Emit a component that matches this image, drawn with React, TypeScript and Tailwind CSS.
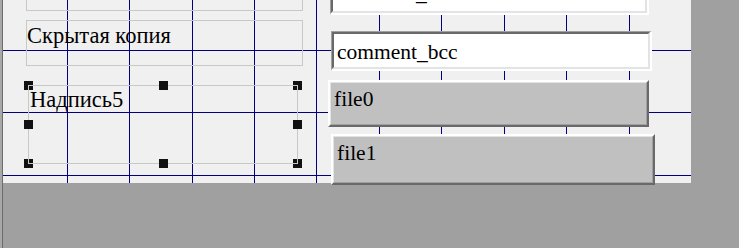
import React from "react";

const VX = [64, 126, 189, 251, 313, 376, 438, 501, 563, 626];
const HY = [50, 112, 175];

function Grid() {
  return (
    <svg className="absolute left-0 top-0" width="688" height="183" shapeRendering="crispEdges">
      {VX.map((x) => (
        <line key={`v${x}`} x1={x + 0.5} y1={0} x2={x + 0.5} y2={183} stroke="#000080" strokeWidth={1} />
      ))}
      {HY.map((y) => (
        <line key={`h${y}`} x1={0} y1={y + 0.5} x2={688} y2={y + 0.5} stroke="#000080" strokeWidth={1} />
      ))}
    </svg>
  );
}

function Handle({ cls, corner }: { cls: string; corner?: "tl" | "tr" | "bl" | "br" }) {
  return (
    <div className={`absolute w-[9px] h-[9px] bg-[#111111] ${cls}`}>
      {corner === "tl" && (
        <>
          <div className="absolute left-[4px] top-[4px] w-[5px] h-px bg-[#c8c8c8]" />
          <div className="absolute left-[4px] top-[4px] w-px h-[5px] bg-[#c8c8c8]" />
        </>
      )}
      {corner === "tr" && (
        <>
          <div className="absolute left-0 top-[4px] w-[5px] h-px bg-[#c8c8c8]" />
          <div className="absolute left-[4px] top-[4px] w-px h-[5px] bg-[#c8c8c8]" />
        </>
      )}
      {corner === "bl" && (
        <>
          <div className="absolute left-[4px] top-[4px] w-[5px] h-px bg-[#c8c8c8]" />
          <div className="absolute left-[4px] top-0 w-px h-[5px] bg-[#c8c8c8]" />
        </>
      )}
      {corner === "br" && (
        <>
          <div className="absolute left-0 top-[4px] w-[5px] h-px bg-[#c8c8c8]" />
          <div className="absolute left-[4px] top-0 w-px h-[5px] bg-[#c8c8c8]" />
        </>
      )}
    </div>
  );
}

function TextBox({ cls, text }: { cls: string; text: string }) {
  return (
    <div className={`border-t border-l border-t-[#a0a0a0] border-l-[#a0a0a0] border-r-2 border-b-2 border-r-white border-b-white ${cls}`}>
      <div className="w-full h-full bg-white border-t-2 border-l-2 border-t-[#696969] border-l-[#696969] border-r-2 border-b-2 border-r-[#e3e3e3] border-b-[#e3e3e3] pt-[6px] pl-[3px] whitespace-nowrap overflow-hidden text-[21.5px]">
        {text}
      </div>
    </div>
  );
}

function Button({ cls, text }: { cls: string; text: string }) {
  return (
    <div className={`border-2 border-t-white border-l-white border-r-[#696969] border-b-[#696969] ${cls}`}>
      <div className="w-full h-full bg-[#c0c0c0] border border-t-[#e3e3e3] border-l-[#e3e3e3] border-r-[#a0a0a0] border-b-[#a0a0a0] pt-[4px] pl-[3px] whitespace-nowrap overflow-hidden text-[21.5px]">
        {text}
      </div>
    </div>
  );
}

export default function App() {
  return (
    <div className="w-[739px] h-[248px] bg-[#a0a0a0] overflow-hidden flex items-start font-['Liberation_Serif',serif] text-[22.5px] leading-[24px] text-black">
      <div className="w-[2px] h-full bg-[#a8a8a8] shrink-0" />
      <div className="w-[1px] h-full bg-[#6d6d6d] shrink-0" />
      <div className="relative w-[688px] h-[183px] bg-[#f0f0f0] shrink-0">
        <Grid />

        <div className="relative flex items-start pl-[23px]">
          {/* labels column */}
          <div className="flex flex-col w-[277px] shrink-0">
            <div className="mt-[-35px] h-[46px] border border-[#c8c8c8] pt-[3px] whitespace-nowrap">Копия</div>
            <div className="mt-[9px] h-[46px] border border-[#c8c8c8] pt-[3px] whitespace-nowrap">Скрытая копия</div>
            <div className="relative mt-[19px] ml-[2px] w-[270px] h-[79px]">
              <div className="w-full h-full border border-[#c8c8c8] pt-[2px] pl-[1px] whitespace-nowrap">
                Надпись5
              </div>
              <Handle cls="left-[-4px] top-[-4px]" corner="tl" />
              <Handle cls="left-[131px] top-[-4px]" />
              <Handle cls="left-[265px] top-[-4px]" corner="tr" />
              <Handle cls="left-[-4px] top-[35px]" />
              <Handle cls="left-[265px] top-[35px]" />
              <Handle cls="left-[-4px] top-[74px]" corner="bl" />
              <Handle cls="left-[131px] top-[74px]" />
              <Handle cls="left-[265px] top-[74px]" corner="br" />
            </div>
          </div>

          {/* controls column */}
          <div className="flex flex-col items-start ml-[25px] shrink-0">
            <TextBox cls="mt-[-28px] ml-[2px] w-[319px] h-[43px]" text="comment_cc" />
            <TextBox cls="mt-[16px] ml-[3px] w-[321px] h-[40px]" text="comment_bcc" />
            <Button cls="mt-[9px] w-[321px] h-[47px]" text="file0" />
            <Button cls="mt-[7px] ml-[3px] w-[324px] h-[51px]" text="file1" />
          </div>
        </div>
      </div>
    </div>
  );
}
